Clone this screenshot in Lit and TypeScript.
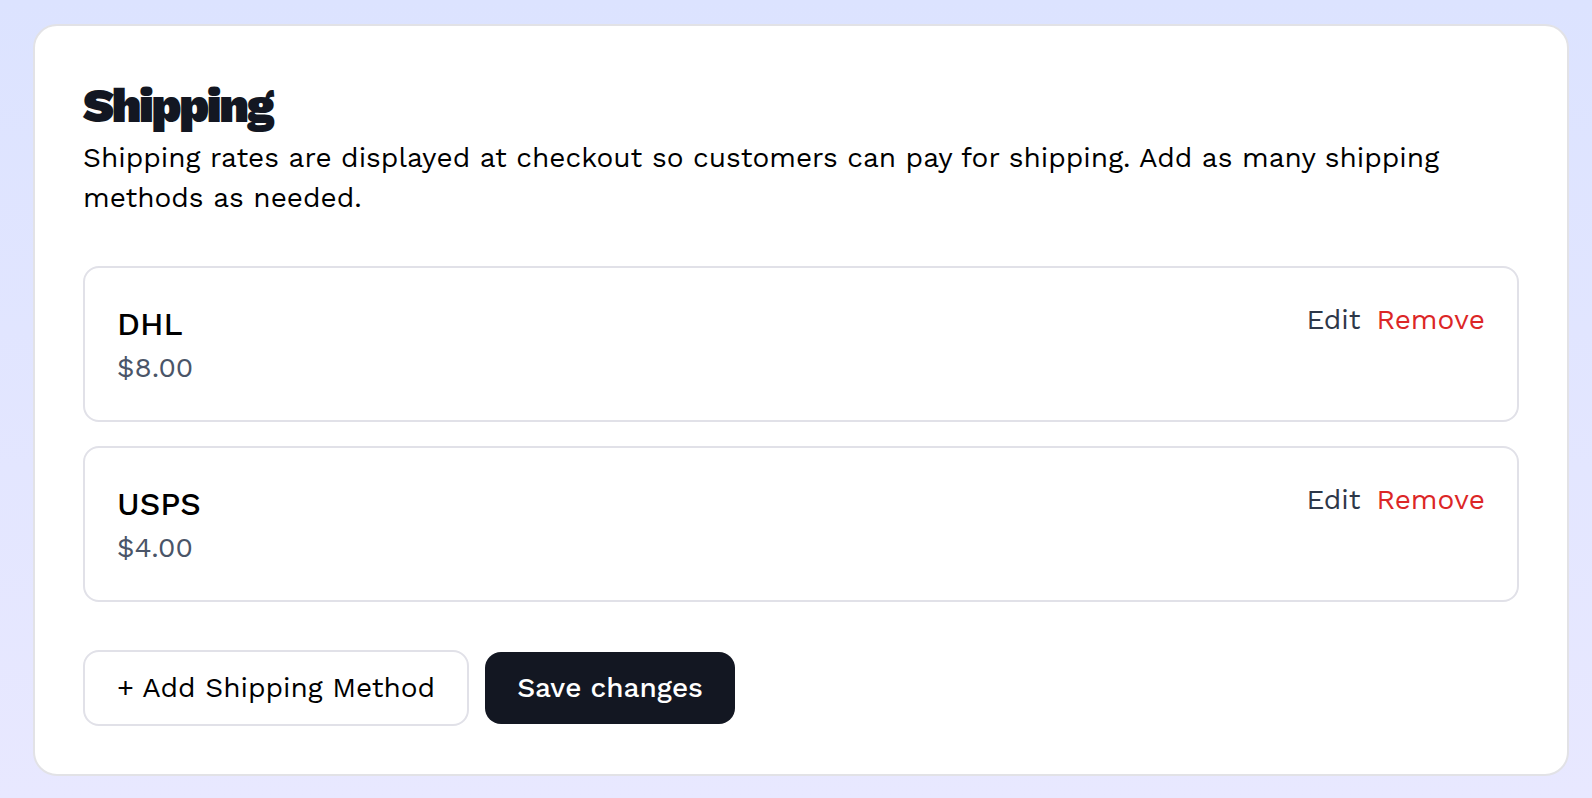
import { LitElement, html, css } from "lit";
import { customElement, state } from "lit/decorators.js";

interface ShippingMethod {
  name: string;
  price: number;
}

@customElement("app-root")
export class AppRoot extends LitElement {
  static styles = css`
    :host {
      display: block;
      box-sizing: border-box;
      min-height: 100vh;
      padding: 24px 23px 22px 33px;
      background: linear-gradient(#dce3ff, #e8e8ff);
      color: #000;
      font-family: "Work Sans", Inter, sans-serif;
      font-size: 28px;
      line-height: 40px;
    }
    .card {
      padding: 48px;
      background: #fff;
      border: 2px solid #e2e2e6;
      border-radius: 24px;
    }
    .title {
      margin: 0;
      color: #131722;
      font-size: 48px;
      font-weight: 900;
      line-height: 64px;
      letter-spacing: -0.05em;
    }
    .intro {
      margin: 0 0 48px;
    }
    .methods {
      display: flex;
      flex-direction: column;
      gap: 24px;
      margin: 0 0 48px;
      padding: 0;
      list-style: none;
    }
    .method {
      display: flex;
      justify-content: space-between;
      align-items: flex-start;
      padding: 32px;
      border: 2px solid #e1e1e8;
      border-radius: 16px;
    }
    .name {
      margin: 0;
      font-size: 32px;
      font-weight: 500;
      line-height: 48px;
    }
    .price {
      margin: 0;
      color: #4a5568;
    }
    .links,
    .actions {
      display: flex;
      align-items: center;
      gap: 16px;
    }
    button {
      margin: 0;
      padding: 0;
      border: 0;
      background: none;
      color: inherit;
      font: inherit;
      cursor: pointer;
    }
    .edit {
      color: #2d3748;
    }
    .remove {
      color: #dc2626;
    }
    .add,
    .save {
      padding: 16px 32px;
      border-radius: 16px;
    }
    .add {
      border: 2px solid #e1e1e8;
    }
    .save {
      background: #131722;
      color: #fff;
      font-weight: 500;
    }
  `;

  @state() private methods: ShippingMethod[] = [
    { name: "DHL", price: 8 },
    { name: "USPS", price: 4 },
  ];

  private remove(method: ShippingMethod) {
    this.methods = this.methods.filter((m) => m !== method);
  }

  render() {
    return html`
      <main class="card">
        <h1 class="title">Shipping</h1>
        <p class="intro">
          Shipping rates are displayed at checkout so customers can pay for
          shipping. Add as many shipping methods as needed.
        </p>
        <ul class="methods">
          ${this.methods.map(
            (method) => html`
              <li class="method">
                <div>
                  <h2 class="name">${method.name}</h2>
                  <p class="price">$${method.price.toFixed(2)}</p>
                </div>
                <div class="links">
                  <button class="edit" type="button">Edit</button>
                  <button class="remove" type="button" @click=${() => this.remove(method)}>Remove</button>
                </div>
              </li>
            `,
          )}
        </ul>
        <div class="actions">
          <button class="add" type="button">+ Add Shipping Method</button>
          <button class="save" type="button">Save changes</button>
        </div>
      </main>
    `;
  }
}
